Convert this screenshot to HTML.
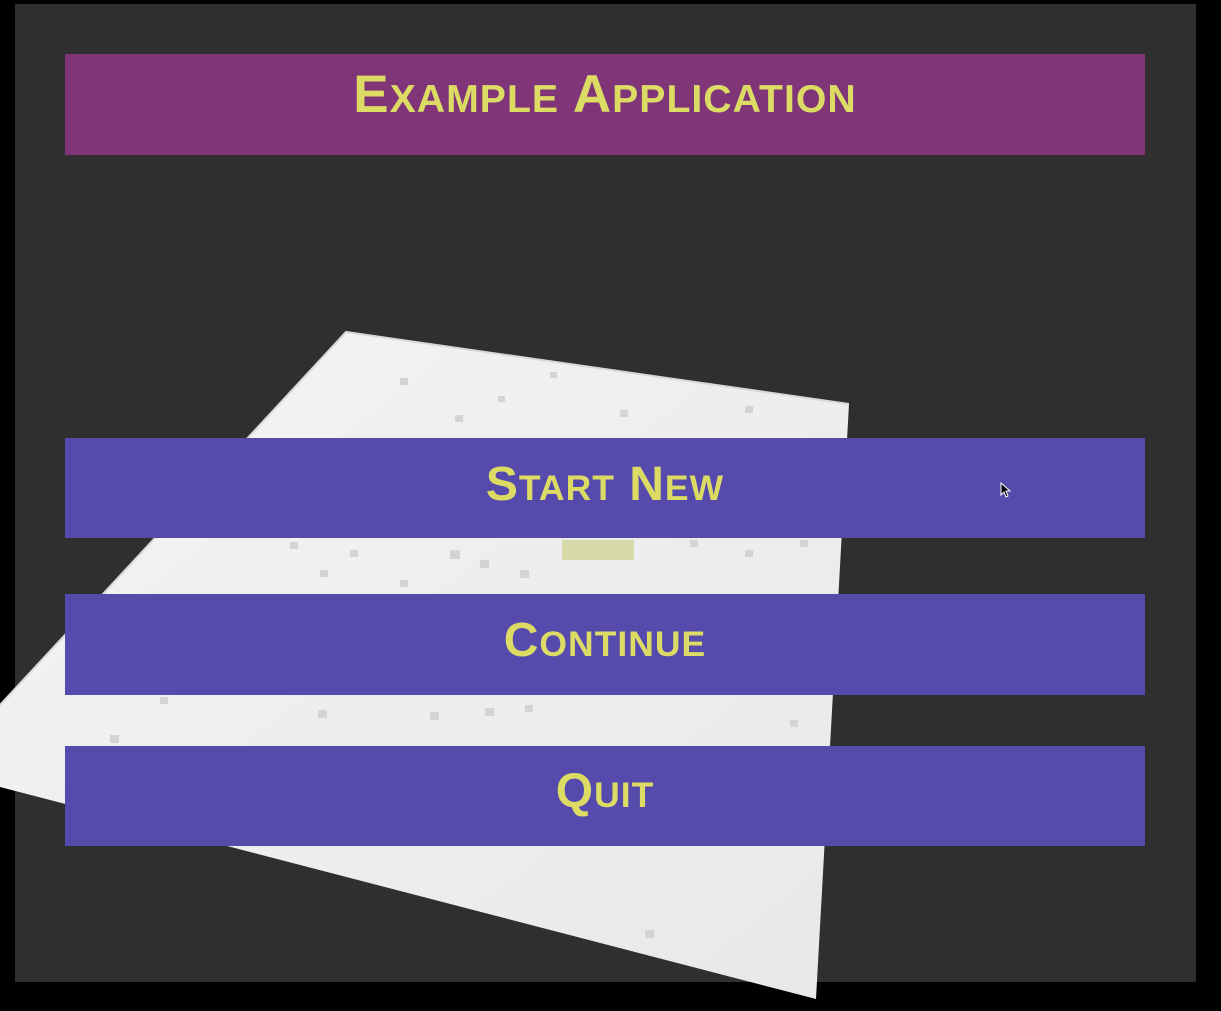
<!DOCTYPE html>
<html><head><style>
html,body{margin:0;padding:0;background:#000;width:1221px;height:1011px;overflow:hidden;position:relative;font-family:"Liberation Sans",sans-serif}
.frame{position:absolute;left:15px;top:4px;width:1181px;height:978px;background:#2f2f2f}
svg{position:absolute;left:0;top:0}
.box{position:absolute;left:65px;width:1080px;height:101px}
.t{position:absolute;left:65px;width:1080px;text-align:center;color:#dcdc64;font-weight:bold;line-height:1;white-space:nowrap}
.t span.w{display:inline-block;transform:scaleX(1.0);letter-spacing:1px}
.s{font-size:0.74em}
</style></head><body>
<div class="frame"></div>
<svg width="1221" height="1011">
<defs><linearGradient id="g" x1="0" y1="0" x2="1" y2="1"><stop offset="0" stop-color="#f4f4f4"/><stop offset="1" stop-color="#e8e8e8"/></linearGradient></defs>
<polygon points="346,332 849,404 816,999 0,787 0,705" fill="url(#g)"/>
<polyline points="0,705 346,332 849,404" fill="none" stroke="#d8d8d8" stroke-width="2"/>
<g fill="#d4d4d4">
<rect x="400" y="378" width="8" height="7"/><rect x="455" y="415" width="8" height="7"/><rect x="550" y="372" width="7" height="6"/><rect x="620" y="410" width="8" height="7"/><rect x="745" y="406" width="8" height="7"/><rect x="498" y="396" width="7" height="6"/>
<rect x="290" y="542" width="8" height="7"/><rect x="350" y="550" width="8" height="7"/><rect x="450" y="550" width="10" height="9"/><rect x="480" y="560" width="9" height="8"/><rect x="520" y="570" width="9" height="8"/><rect x="690" y="540" width="8" height="7"/><rect x="745" y="550" width="8" height="7"/><rect x="800" y="540" width="8" height="7"/><rect x="320" y="570" width="8" height="7"/><rect x="400" y="580" width="8" height="7"/>
<rect x="318" y="710" width="9" height="8"/><rect x="430" y="712" width="9" height="8"/><rect x="485" y="708" width="9" height="8"/><rect x="525" y="705" width="8" height="7"/><rect x="790" y="720" width="8" height="7"/><rect x="110" y="735" width="9" height="8"/><rect x="160" y="697" width="8" height="7"/><rect x="645" y="930" width="9" height="8"/>
</g>
<rect x="562" y="540" width="72" height="20" fill="#d6d9a8"/>
</svg>
<div class="box" style="top:54px;background:#7f3578"></div>
<div class="t" style="top:68px;font-size:53px"><span class="w">E<span class="s">XAMPLE</span> A<span class="s">PPLICATION</span></span></div>
<div class="box" style="top:438px;height:100px;background:#574aad"></div>
<div class="t" style="top:461px;font-size:48px"><span class="w">S<span class="s">TART</span> N<span class="s">EW</span></span></div>
<div class="box" style="top:594px;background:#574aad"></div>
<div class="t" style="top:617px;font-size:48px"><span class="w">C<span class="s">ONTINUE</span></span></div>
<div class="box" style="top:746px;height:100px;background:#574aad"></div>
<div class="t" style="top:768px;font-size:48px"><span class="w">Q<span class="s">UIT</span></span></div>
<svg width="12" height="18" style="left:1000px;top:482px"><path d="M1,1 L1,13 L4,10 L6,15 L8,14 L6,9 L10,9 Z" fill="#000" stroke="#fff" stroke-width="1"/></svg>
</body></html>
